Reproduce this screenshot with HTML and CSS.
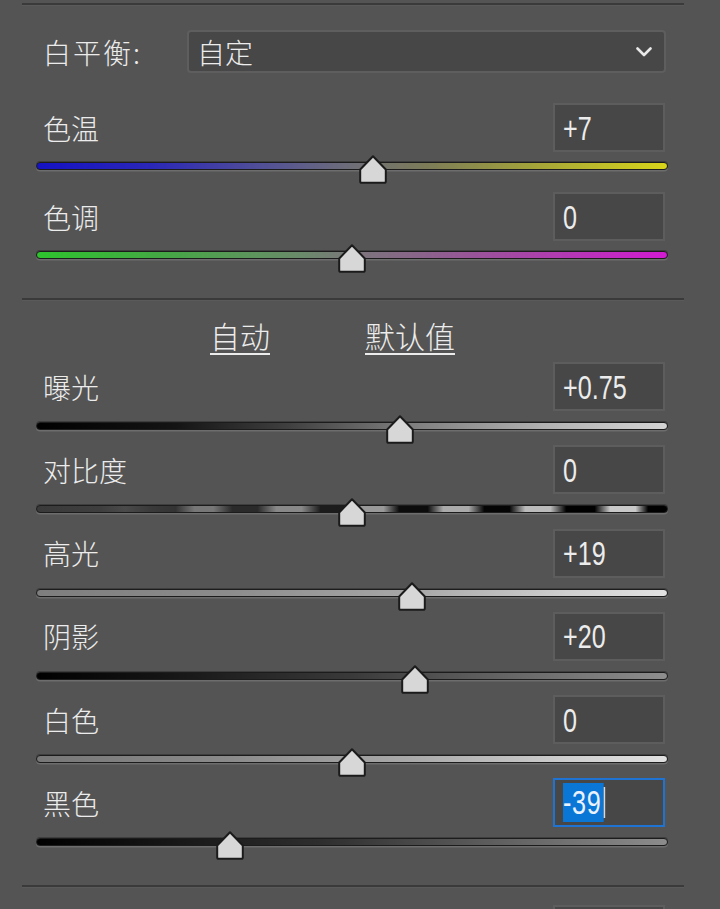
FILE: index.html
```html
<!DOCTYPE html>
<html lang="zh-CN">
<head>
<meta charset="utf-8">
<title>基本</title>
<link rel="stylesheet" href="styles.css">
</head>
<body>
<div class="panel">
  <div class="divider first"></div>

  <div class="wb-row">
    <span class="label wb-label">白平衡:</span>
    <div class="select">
      <span class="select-text">自定</span>
      <svg class="chev" width="16" height="10" viewBox="0 0 16 10"><polyline points="1.5,1.5 8,8 14.5,1.5"/></svg>
    </div>
  </div>

  <section class="group group-wb">
    <div class="slider">
      <div class="head"><span class="label">色温</span><div class="value"><span class="num">+7</span></div></div>
      <div class="track t-temp">
        <svg class="thumb" style="left:322px" width="28" height="29" viewBox="0 0 28 29"><path d="M14 1.2 L26.8 14.5 L26.8 26.2 Q26.8 27.8 25.2 27.8 L2.8 27.8 Q1.2 27.8 1.2 26.2 L1.2 14.5 Z"/></svg>
      </div>
    </div>
    <div class="slider">
      <div class="head"><span class="label">色调</span><div class="value"><span class="num">0</span></div></div>
      <div class="track t-tint">
        <svg class="thumb" style="left:301px" width="28" height="29" viewBox="0 0 28 29"><path d="M14 1.2 L26.8 14.5 L26.8 26.2 Q26.8 27.8 25.2 27.8 L2.8 27.8 Q1.2 27.8 1.2 26.2 L1.2 14.5 Z"/></svg>
      </div>
    </div>
  </section>

  <div class="divider"></div>

  <div class="links">
    <a class="link">自动</a>
    <a class="link">默认值</a>
  </div>

  <section class="group group-tone">
    <div class="slider">
      <div class="head"><span class="label">曝光</span><div class="value"><span class="num">+0.75</span></div></div>
      <div class="track t-exposure">
        <svg class="thumb" style="left:349px" width="28" height="29" viewBox="0 0 28 29"><path d="M14 1.2 L26.8 14.5 L26.8 26.2 Q26.8 27.8 25.2 27.8 L2.8 27.8 Q1.2 27.8 1.2 26.2 L1.2 14.5 Z"/></svg>
      </div>
    </div>
    <div class="slider">
      <div class="head"><span class="label">对比度</span><div class="value"><span class="num">0</span></div></div>
      <div class="track t-contrast">
        <svg class="thumb" style="left:301px" width="28" height="29" viewBox="0 0 28 29"><path d="M14 1.2 L26.8 14.5 L26.8 26.2 Q26.8 27.8 25.2 27.8 L2.8 27.8 Q1.2 27.8 1.2 26.2 L1.2 14.5 Z"/></svg>
      </div>
    </div>
    <div class="slider">
      <div class="head"><span class="label">高光</span><div class="value"><span class="num">+19</span></div></div>
      <div class="track t-high">
        <svg class="thumb" style="left:361px" width="28" height="29" viewBox="0 0 28 29"><path d="M14 1.2 L26.8 14.5 L26.8 26.2 Q26.8 27.8 25.2 27.8 L2.8 27.8 Q1.2 27.8 1.2 26.2 L1.2 14.5 Z"/></svg>
      </div>
    </div>
    <div class="slider">
      <div class="head"><span class="label">阴影</span><div class="value"><span class="num">+20</span></div></div>
      <div class="track t-shadow">
        <svg class="thumb" style="left:364px" width="28" height="29" viewBox="0 0 28 29"><path d="M14 1.2 L26.8 14.5 L26.8 26.2 Q26.8 27.8 25.2 27.8 L2.8 27.8 Q1.2 27.8 1.2 26.2 L1.2 14.5 Z"/></svg>
      </div>
    </div>
    <div class="slider">
      <div class="head"><span class="label">白色</span><div class="value"><span class="num">0</span></div></div>
      <div class="track t-white">
        <svg class="thumb" style="left:301px" width="28" height="29" viewBox="0 0 28 29"><path d="M14 1.2 L26.8 14.5 L26.8 26.2 Q26.8 27.8 25.2 27.8 L2.8 27.8 Q1.2 27.8 1.2 26.2 L1.2 14.5 Z"/></svg>
      </div>
    </div>
    <div class="slider">
      <div class="head"><span class="label">黑色</span><div class="value focused"><span class="num"><span class="sel">-39</span><span class="caret"></span></span></div></div>
      <div class="track t-black">
        <svg class="thumb" style="left:179px" width="28" height="29" viewBox="0 0 28 29"><path d="M14 1.2 L26.8 14.5 L26.8 26.2 Q26.8 27.8 25.2 27.8 L2.8 27.8 Q1.2 27.8 1.2 26.2 L1.2 14.5 Z"/></svg>
      </div>
    </div>
  </section>

  <div class="divider last"></div>

  <div class="head next"><span class="label"></span><div class="value"></div></div>
</div>
</body>
</html>
```

FILE: styles.css
```css
html, body {
  margin: 0;
  padding: 0;
  background: #545454;
}

body {
  width: 720px;
  height: 909px;
  overflow: hidden;
  font-family: "Noto Sans CJK SC", "Noto Sans", sans-serif;
  color: #ececec;
}

.panel {
  display: flex;
  flex-direction: column;
}

.divider {
  height: 2px;
  margin: 0 36px 0 22px;
  background: #3a3a3a;
  box-shadow: 0 1px 0 rgba(255, 255, 255, 0.04);
}

.divider.first {
  margin-top: 3px;
}

.divider.last {
  margin-top: 39px;
}

.label {
  font-size: 28px;
  font-weight: 300;
  line-height: 1;
  color: #ececec;
}

.wb-row {
  display: flex;
  align-items: center;
  margin-top: 25px;
  padding: 0 54px 0 43px;
}

.wb-label {
  width: 144px;
  letter-spacing: 2px;
}

.select {
  flex: 1;
  height: 43px;
  box-sizing: border-box;
  border: 2px solid #5e5e5e;
  border-radius: 4px;
  background: #474747;
  display: flex;
  align-items: center;
  justify-content: space-between;
  padding: 0 12px 0 8px;
}

.select-text {
  font-size: 28px;
  font-weight: 300;
  line-height: 1;
  color: #ececec;
}

.chev polyline {
  fill: none;
  stroke: #e8e8e8;
  stroke-width: 2.6;
  stroke-linecap: round;
  stroke-linejoin: round;
}

.group-wb {
  margin-top: 30px;
}

.group-wb .slider {
  margin-bottom: 22px;
}

.group-wb .slider:last-child {
  margin-bottom: 39px;
}

.group-tone .slider {
  margin-bottom: 15.3px;
}

.group-tone .slider:last-child {
  margin-bottom: 0;
}

.group-tone .track {
  margin-top: 11px;
}

.head {
  display: flex;
  align-items: center;
  justify-content: space-between;
  height: 49px;
  padding: 0 55px 0 43px;
}

.value {
  width: 112px;
  height: 49px;
  box-sizing: border-box;
  border: 2px solid #5d5d5d;
  background: #474747;
  display: flex;
  align-items: center;
  padding-left: 8px;
  overflow: hidden;
}

.value.focused {
  border-color: #1f73d2;
}

.num {
  display: inline-flex;
  align-items: center;
  font-family: "Liberation Sans", "DejaVu Sans", sans-serif;
  font-size: 34px;
  line-height: 1;
  color: #ececec;
  transform: scaleX(0.74);
  transform-origin: left center;
  white-space: nowrap;
}

.sel {
  background: #0a76d6;
  color: #eaf2ff;
  padding: 2px 3px 3px 0;
  letter-spacing: 1px;
}

.caret {
  display: inline-block;
  width: 2px;
  height: 31px;
  background: #d8d8d8;
}

.track {
  position: relative;
  height: 8px;
  margin: 10px 52px 0 36px;
  box-sizing: border-box;
  border: 1.5px solid #1c1c1c;
  border-radius: 4px;
  box-shadow: 0 1.5px 0 rgba(140, 140, 140, 0.45), 0 -1px 0 rgba(40, 40, 40, 0.5);
}

.thumb {
  position: absolute;
  top: -8px;
  overflow: visible;
}

.thumb path {
  fill: #d7d7d7;
  stroke: #1b1b1b;
  stroke-width: 2;
  stroke-linejoin: round;
}

.t-temp {
  background: linear-gradient(to right, #1512c4 0%, #2a27b8 18%, #504e98 35%, #6e6e78 50%, #7c7c58 62%, #a6a638 80%, #d9d51a 100%);
}

.t-tint {
  background: linear-gradient(to right, #2ec42e 0%, #44a844 20%, #6a8a6a 42%, #7a767a 50%, #8c628c 62%, #b03cb0 82%, #d21ad2 100%);
}

.t-exposure {
  background: linear-gradient(to right, #000 0%, #141414 22%, #404040 40%, #7a7a7a 58%, #b0b0b0 80%, #d4d4d4 100%);
}

.t-contrast {
  background: linear-gradient(to right,
    #3a3a3a 0%, #3e3e3e 10%, #4a4a4a 14%, #3a3a3a 18%,
    #333 22%, #777 25%, #777 28%, #2a2a2a 31%, #2a2a2a 35%,
    #888 38%, #888 42%, #1c1c1c 45%, #1c1c1c 49%,
    #999 51.5%, #999 55%, #0c0c0c 57.5%, #0c0c0c 62%,
    #aaa 64.5%, #aaa 68.5%, #050505 71%, #050505 75%,
    #bbb 77.5%, #bbb 81.5%, #000 84%, #000 88.5%,
    #c8c8c8 91%, #c8c8c8 95%, #000 97%, #000 100%);
}

.t-high {
  background: linear-gradient(to right, #7e7e7e 0%, #8c8c8c 30%, #a8a8a8 60%, #d0d0d0 85%, #e2e2e2 100%);
}

.t-shadow {
  background: linear-gradient(to right, #000 0%, #1a1a1a 25%, #3a3a3a 50%, #666 75%, #8e8e8e 100%);
}

.t-white {
  background: linear-gradient(to right, #777 0%, #8a8a8a 30%, #aaa 60%, #cfcfcf 85%, #e0e0e0 100%);
}

.t-black {
  background: linear-gradient(to right, #000 0%, #151515 20%, #2e2e2e 45%, #5a5a5a 70%, #8c8c8c 100%);
}

.links {
  display: flex;
  align-items: center;
  gap: 95px;
  height: 36px;
  margin-top: 17px;
  margin-bottom: 9px;
  padding-left: 210px;
}

.link {
  font-size: 30px;
  font-weight: 300;
  line-height: 1;
  color: #ececec;
  text-decoration: underline;
  text-decoration-thickness: 2px;
  text-underline-offset: 5px;
  cursor: pointer;
}

.head.next {
  margin-top: 18px;
}
```
